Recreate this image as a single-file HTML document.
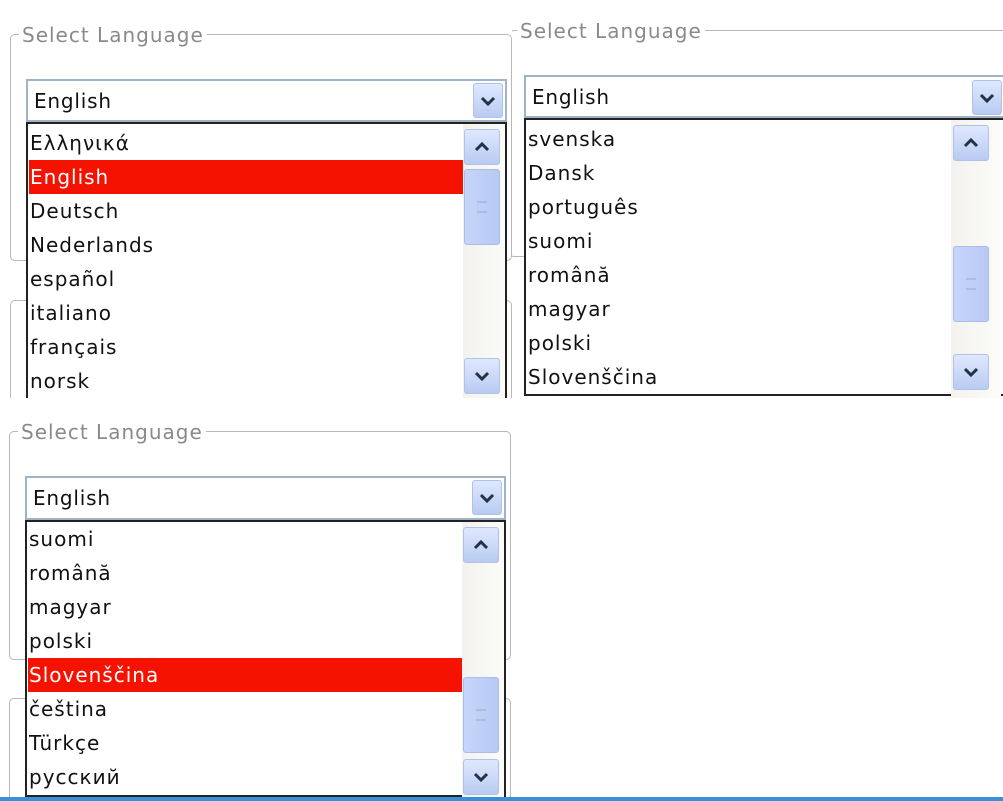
<!DOCTYPE html>
<html><head><meta charset="utf-8"><style>
html,body{margin:0;width:1003px;height:801px;overflow:hidden}
body{background:#fff;position:relative;font-family:"DejaVu Sans","Liberation Sans",sans-serif;}
.p{position:absolute;overflow:hidden;background:#fff}
.a{position:absolute}
.fs{position:absolute;border:1.5px solid #b8b8b8;border-radius:5px}
.lg{position:absolute;background:#fff;color:#8a8a8a;font-size:20px;letter-spacing:1px;padding:0 3px;line-height:22px}
.sel{position:absolute;border:2px solid #9fb3c8;background:#fff;box-sizing:border-box}
.sel span{position:absolute;left:6px;top:8px;font-size:20px;letter-spacing:0.8px;color:#111}
.btn{position:absolute;background:linear-gradient(#dfe8ff,#b9cbf2);border:1px solid #b0c2e6;border-radius:3px;box-sizing:border-box}
.btn svg{position:absolute;left:50%;top:50%;transform:translate(-50%,-50%)}
.lst{position:absolute;border:2px solid #222;background:#fff;box-sizing:border-box}
.it{position:absolute;left:1px;height:34px;line-height:34px;font-size:20px;letter-spacing:1px;color:#111;padding-left:1px}
.hl{background:#f51200;color:#fff}
.sb{position:absolute;background:linear-gradient(90deg,#f3f2ee,#fbfbf9)}
.th{position:absolute;background:linear-gradient(90deg,#c6d5fb,#b7caf4);border:1px solid #a9bde8;border-radius:3px;box-sizing:border-box}
.th i{position:absolute;left:50%;top:50%;width:10px;height:9px;transform:translate(-50%,-50%);border-top:1px solid #9ab;border-bottom:1px solid #9ab}
</style></head><body>

<!-- Panel 1 -->
<div class="p" style="left:0;top:0;width:512px;height:398px">
 <div class="fs" style="left:10px;top:34px;width:500px;height:225px"></div>
 <div class="fs" style="left:10px;top:300px;width:500px;height:200px"></div>
 <div class="lg" style="left:19px;top:24px">Select Language</div>
 <div class="sel" style="left:26px;top:79px;width:481px;height:43px"><span>English</span></div>
 <div class="btn" style="left:473px;top:83px;width:30px;height:35px"><svg width="16" height="10"><path d="M2 2 L8 8 L14 2" stroke="#234" stroke-width="3" fill="none"/></svg></div>
 <div class="lst" style="left:26px;top:122px;width:481px;height:290px">
  <div class="sb" style="left:435px;top:0;width:42px;height:290px"></div>
  <div class="it" style="top:2px">Ελληνικά</div>
  <div class="it hl" style="top:36px;width:433px">English</div>
  <div class="it" style="top:70px">Deutsch</div>
  <div class="it" style="top:104px">Nederlands</div>
  <div class="it" style="top:138px">español</div>
  <div class="it" style="top:172px">italiano</div>
  <div class="it" style="top:206px">français</div>
  <div class="it" style="top:240px">norsk</div>
  <div class="btn" style="left:436px;top:5px;width:36px;height:36px"><svg width="16" height="10"><path d="M2 8 L8 2 L14 8" stroke="#234" stroke-width="3" fill="none"/></svg></div>
  <div class="th" style="left:436px;top:45px;width:36px;height:76px"><i></i></div>
  <div class="btn" style="left:436px;top:234px;width:36px;height:36px"><svg width="16" height="10"><path d="M2 2 L8 8 L14 2" stroke="#234" stroke-width="3" fill="none"/></svg></div>
 </div>
</div>

<!-- Panel 2 -->
<div class="p" style="left:512px;top:0;width:491px;height:398px">
 <div class="fs" style="left:-3px;top:30px;width:520px;height:225px"></div>
 <div class="lg" style="left:5px;top:20px">Select Language</div>
 <div class="sel" style="left:12px;top:75px;width:490px;height:43px"><span>English</span></div>
 <div class="btn" style="left:460px;top:80px;width:30px;height:35px"><svg width="16" height="10"><path d="M2 2 L8 8 L14 2" stroke="#234" stroke-width="3" fill="none"/></svg></div>
 <div class="lst" style="left:12px;top:118px;width:490px;height:278px">
  <div class="sb" style="left:425px;top:0;width:50px;height:278px"></div>
  <div class="it" style="top:2px">svenska</div>
  <div class="it" style="top:36px">Dansk</div>
  <div class="it" style="top:70px">português</div>
  <div class="it" style="top:104px">suomi</div>
  <div class="it" style="top:138px">română</div>
  <div class="it" style="top:172px">magyar</div>
  <div class="it" style="top:206px">polski</div>
  <div class="it" style="top:240px">Slovenščina</div>
  <div class="btn" style="left:427px;top:5px;width:36px;height:36px"><svg width="16" height="10"><path d="M2 8 L8 2 L14 8" stroke="#234" stroke-width="3" fill="none"/></svg></div>
  <div class="th" style="left:427px;top:126px;width:36px;height:76px"><i></i></div>
  <div class="btn" style="left:427px;top:234px;width:36px;height:36px"><svg width="16" height="10"><path d="M2 2 L8 8 L14 2" stroke="#234" stroke-width="3" fill="none"/></svg></div>
 </div>
</div>

<!-- Panel 3 -->
<div class="p" style="left:0;top:398px;width:512px;height:399px">
 <div class="fs" style="left:9px;top:33px;width:500px;height:227px"></div>
 <div class="fs" style="left:9px;top:300px;width:500px;height:200px"></div>
 <div class="lg" style="left:18px;top:23px">Select Language</div>
 <div class="sel" style="left:25px;top:78px;width:481px;height:44px"><span>English</span></div>
 <div class="btn" style="left:472px;top:82px;width:30px;height:35px"><svg width="16" height="10"><path d="M2 2 L8 8 L14 2" stroke="#234" stroke-width="3" fill="none"/></svg></div>
 <div class="lst" style="left:25px;top:122px;width:481px;height:277px">
  <div class="sb" style="left:435px;top:0;width:42px;height:277px"></div>
  <div class="it" style="top:0px">suomi</div>
  <div class="it" style="top:34px">română</div>
  <div class="it" style="top:68px">magyar</div>
  <div class="it" style="top:102px">polski</div>
  <div class="it hl" style="top:136px;width:433px">Slovenščina</div>
  <div class="it" style="top:170px">čeština</div>
  <div class="it" style="top:204px">Türkçe</div>
  <div class="it" style="top:238px">русский</div>
  <div class="btn" style="left:436px;top:5px;width:36px;height:36px"><svg width="16" height="10"><path d="M2 8 L8 2 L14 8" stroke="#234" stroke-width="3" fill="none"/></svg></div>
  <div class="th" style="left:436px;top:155px;width:36px;height:76px"><i></i></div>
  <div class="btn" style="left:436px;top:237px;width:36px;height:36px"><svg width="16" height="10"><path d="M2 2 L8 8 L14 2" stroke="#234" stroke-width="3" fill="none"/></svg></div>
 </div>
</div>
<div class="a" style="left:0;top:797px;width:1003px;height:4px;background:#3a8fd8"></div>
</body></html>
